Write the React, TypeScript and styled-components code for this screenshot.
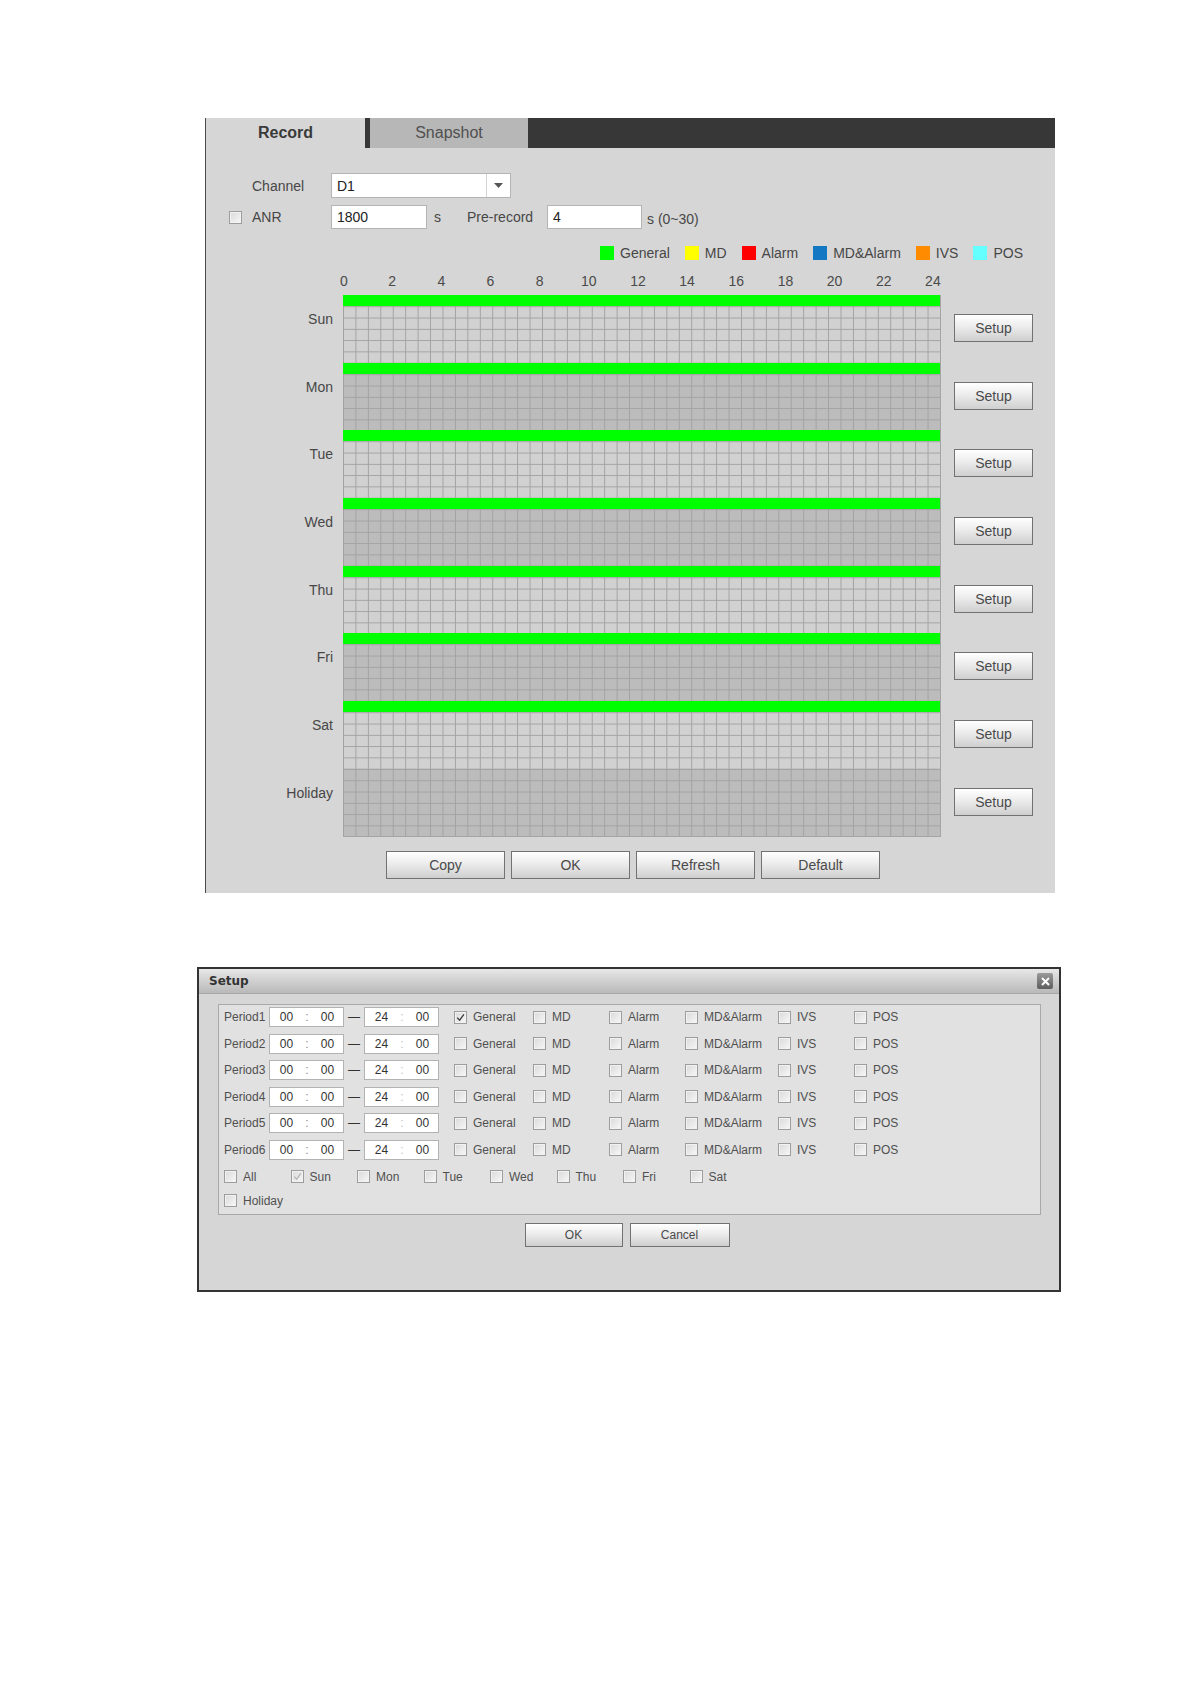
import React from 'react';
import styled, { createGlobalStyle } from 'styled-components';

const GlobalStyle = createGlobalStyle`
  body {
    margin: 0;
    background: #ffffff;
    font-family: "Liberation Sans", Arial, sans-serif;
  }
`;

const Page = styled.div`
  width: 1191px;
  min-height: 1684px;
  padding-top: 118px;
  box-sizing: border-box;
`;

/* ---------- record panel ---------- */

const Panel = styled.section`
  margin-left: 205px;
  width: 850px;
  height: 775px;
  box-sizing: border-box;
  background: #d6d6d6;
  border-left: 1px solid #4a4a4a;
  display: flex;
  flex-direction: column;
  color: #474747;
  font-size: 14px;
`;

const TabBar = styled.div`
  display: flex;
  height: 30px;
  background: #373737;
`;

const Tab = styled.div<{ $active?: boolean }>`
  width: ${p => (p.$active ? 159 : 158)}px;
  display: flex;
  align-items: center;
  justify-content: center;
  font-size: 16px;
  font-weight: ${p => (p.$active ? 700 : 400)};
  color: ${p => (p.$active ? '#3a3a3a' : '#505050')};
  background: ${p => (p.$active ? '#d6d6d6' : '#b7b7b7')};
  & + & {
    margin-left: 5px;
  }
`;

const Form = styled.div`
  padding: 25px 0 0 23px;
  display: flex;
  flex-direction: column;
  gap: 7px;
`;

const FieldRow = styled.div<{ $h: number }>`
  display: flex;
  align-items: center;
  height: ${p => p.$h}px;
`;

const CheckSlot = styled.div`
  width: 23px;
  display: flex;
`;

const FieldLabel = styled.span<{ $w: number }>`
  width: ${p => p.$w}px;
  flex: none;
`;

const TextBox = styled.div<{ $w: number }>`
  width: ${p => p.$w}px;
  height: 100%;
  box-sizing: border-box;
  border: 1px solid #b4b4b4;
  background: #fff;
  display: flex;
  align-items: center;
  padding-left: 5px;
  color: #222;
`;

const SelectBox = styled(TextBox)`
  justify-content: space-between;
  padding-right: 0;
`;

const SelectArrow = styled.span`
  width: 23px;
  height: 100%;
  border-left: 1px solid #d4d4d4;
  display: flex;
  align-items: center;
  justify-content: center;
`;

const Unit = styled.span<{ $ml: number; $mr?: number; $down?: number }>`
  margin-left: ${p => p.$ml}px;
  margin-right: ${p => p.$mr ?? 0}px;
  padding-top: ${p => p.$down ?? 0}px;
`;

const Legend = styled.div`
  display: flex;
  align-items: center;
  height: 16px;
  margin-top: 16px;
  padding-left: 394px;
  gap: 15px;
`;

const LegendItem = styled.span`
  display: flex;
  align-items: center;
  gap: 6px;
`;

const Swatch = styled.span<{ $c: string }>`
  width: 14px;
  height: 14px;
  background: ${p => p.$c};
`;

const Axis = styled.div`
  display: flex;
  justify-content: space-between;
  width: 590px;
  height: 16px;
  margin: 12px 0 6px 137px;
  color: #4a4a4a;
`;

const Tick = styled.span<{ $shift: number }>`
  width: 0;
  display: flex;
  justify-content: center;
  white-space: nowrap;
  transform: translateX(${p => p.$shift}px);
`;

const Schedule = styled.div`
  display: flex;
  flex-direction: column;
`;

const DayRow = styled.div`
  display: flex;
  height: 67.7px;
`;

const DayLabel = styled.span`
  width: 127px;
  margin-right: 10px;
  padding-top: 16px;
  text-align: right;
  line-height: 16px;
  box-sizing: border-box;
`;

const DayGrid = styled.div<{ $dark: boolean; $last?: boolean }>`
  width: 598px;
  box-sizing: border-box;
  border-right: 1px solid #a4a4a4;
  border-bottom: ${p => (p.$last ? '1px solid #a4a4a4' : 'none')};
  background-color: ${p => (p.$dark ? '#bcbcbc' : '#d1d1d1')};
  background-image: linear-gradient(to right, #a2a2a2 1px, transparent 1px),
    linear-gradient(to bottom, #a2a2a2 1px, transparent 1px);
  background-size: calc(100% / 48) 11.283px;
`;

const RecordBar = styled.div`
  height: 11px;
  background: #00ff00;
`;

const Button = styled.button<{ $w: number; $h: number; $fs?: number }>`
  width: ${p => p.$w}px;
  height: ${p => p.$h}px;
  flex: none;
  padding: 0;
  box-sizing: border-box;
  border: 1px solid #727272;
  background: linear-gradient(#ffffff 0%, #ececec 45%, #cfcfcf 100%);
  font-family: "Liberation Sans", Arial, sans-serif;
  font-size: ${p => p.$fs ?? 14}px;
  color: #4a4a4a;
`;

const SetupSlot = styled.div`
  margin-left: 13px;
  padding-top: 19px;
`;

const ActionRow = styled.div`
  display: flex;
  gap: 6px;
  margin: 14px 0 0 180px;
`;

/* ---------- setup dialog ---------- */

const Dialog = styled.section`
  margin: 74px 0 0 197px;
  width: 864px;
  height: 325px;
  box-sizing: border-box;
  border: 2px solid #333;
  background: #d6d6d6;
  display: flex;
  flex-direction: column;
  font-size: 12px;
  color: #505050;
`;

const DialogHeader = styled.header`
  height: 24px;
  border-bottom: 1px solid #a8a8a8;
  background: linear-gradient(#e8e8e8 0%, #d2d2d2 45%, #b9b9b9 100%);
  display: flex;
  align-items: center;
  justify-content: space-between;
  padding: 0 6px 0 10px;
`;

const DialogTitle = styled.span`
  font-family: "DejaVu Sans", Verdana, sans-serif;
  font-weight: 700;
  font-size: 12px;
  color: #333;
`;

const CloseButton = styled.span`
  width: 16px;
  height: 16px;
  border-radius: 2px;
  background: linear-gradient(#9a9a9a, #5e5e5e);
  display: flex;
  align-items: center;
  justify-content: center;
`;

const DialogBody = styled.div`
  padding: 10px 18px 0 19px;
  display: flex;
  flex-direction: column;
`;

const PeriodPanel = styled.div`
  height: 211px;
  box-sizing: border-box;
  border: 1px solid #a9a9a9;
  background: #e1e1e1;
  padding: 2px 0 0 5px;
  display: flex;
  flex-direction: column;
`;

const PeriodList = styled.div`
  display: flex;
  flex-direction: column;
  gap: 6.6px;
`;

const PeriodRow = styled.div`
  display: flex;
  align-items: center;
  height: 20px;
`;

const PeriodLabel = styled.span`
  width: 45px;
`;

const TimeBox = styled.div`
  width: 75px;
  height: 20px;
  box-sizing: border-box;
  border: 1px solid #b2b2b2;
  background: #fff;
  display: grid;
  grid-template-columns: 33px 8px 33px;
  align-items: center;
  text-align: center;
  color: #333;
`;

const Colon = styled.span<{ $pale?: boolean }>`
  color: ${p => (p.$pale ? '#c4c4c4' : '#8a8a8a')};
`;

const Dash = styled.span`
  width: 20px;
  text-align: center;
  color: #333;
`;

const TypeGrid = styled.div`
  display: grid;
  grid-template-columns: 79px 76px 76px 93px 76px auto;
  margin-left: 15px;
`;

const DayGridRow = styled.div<{ $mt: number }>`
  display: grid;
  grid-template-columns: repeat(8, 66.5px);
  height: 20px;
  align-items: center;
  margin-top: ${p => p.$mt}px;
`;

const CheckItem = styled.label`
  display: flex;
  align-items: center;
  gap: 6px;
  white-space: nowrap;
`;

const Box = styled.span`
  width: 13px;
  height: 13px;
  flex: none;
  box-sizing: border-box;
  border: 1px solid #9d9d9d;
  background: linear-gradient(135deg, #d9d9d9, #f8f8f8);
  box-shadow: inset 0 0 0 1px #f2f2f2;
  display: inline-flex;
  align-items: center;
  justify-content: center;
`;

const DialogActions = styled.div`
  display: flex;
  justify-content: center;
  gap: 7px;
  margin-top: 8px;
  padding-right: 5px;
`;

/* ---------- pieces ---------- */

const CheckBox = ({ checked, faded }: { checked?: boolean; faded?: boolean }) => (
  <Box>
    {checked && (
      <svg width="9" height="9" viewBox="0 0 9 9">
        <path
          d="M1.2 4.6 L3.6 7.2 L7.9 1.4"
          fill="none"
          stroke={faded ? '#b5b5b5' : '#3a3a3a'}
          strokeWidth="1.3"
        />
      </svg>
    )}
  </Box>
);

const legend = [
  { name: 'General', color: '#00ff00' },
  { name: 'MD', color: '#ffff00' },
  { name: 'Alarm', color: '#ff0000' },
  { name: 'MD&Alarm', color: '#1479c2' },
  { name: 'IVS', color: '#ff8c00' },
  { name: 'POS', color: '#66ffff' },
];

const days = [
  { name: 'Sun', rec: true },
  { name: 'Mon', rec: true },
  { name: 'Tue', rec: true },
  { name: 'Wed', rec: true },
  { name: 'Thu', rec: true },
  { name: 'Fri', rec: true },
  { name: 'Sat', rec: true },
  { name: 'Holiday', rec: false },
];

const hours = [0, 2, 4, 6, 8, 10, 12, 14, 16, 18, 20, 22, 24];

const weekDays = ['All', 'Sun', 'Mon', 'Tue', 'Wed', 'Thu', 'Fri', 'Sat'];

function RecordPanel() {
  return (
    <Panel>
      <TabBar>
        <Tab $active>Record</Tab>
        <Tab>Snapshot</Tab>
      </TabBar>

      <Form>
        <FieldRow $h={25}>
          <CheckSlot />
          <FieldLabel $w={79}>Channel</FieldLabel>
          <SelectBox $w={180}>
            D1
            <SelectArrow>
              <svg width="9" height="5" viewBox="0 0 9 5">
                <path d="M0 0 L9 0 L4.5 5 Z" fill="#555" />
              </svg>
            </SelectArrow>
          </SelectBox>
        </FieldRow>
        <FieldRow $h={24}>
          <CheckSlot>
            <CheckBox />
          </CheckSlot>
          <FieldLabel $w={79}>ANR</FieldLabel>
          <TextBox $w={96}>1800</TextBox>
          <Unit $ml={7} $mr={26}>s</Unit>
          <FieldLabel $w={80}>Pre-record</FieldLabel>
          <TextBox $w={95}>4</TextBox>
          <Unit $ml={5} $down={4}>s (0~30)</Unit>
        </FieldRow>
      </Form>

      <Legend>
        {legend.map(l => (
          <LegendItem key={l.name}>
            <Swatch $c={l.color} />
            {l.name}
          </LegendItem>
        ))}
      </Legend>

      <Axis>
        {hours.map(h => (
          <Tick key={h} $shift={h === 0 ? 1 : 0}>
            {h}
          </Tick>
        ))}
      </Axis>

      <Schedule>
        {days.map((d, i) => (
          <DayRow key={d.name}>
            <DayLabel>{d.name}</DayLabel>
            <DayGrid $dark={i % 2 === 1} $last={i === days.length - 1}>
              {d.rec && <RecordBar />}
            </DayGrid>
            <SetupSlot>
              <Button $w={79} $h={28}>Setup</Button>
            </SetupSlot>
          </DayRow>
        ))}
      </Schedule>

      <ActionRow>
        <Button $w={119} $h={28}>Copy</Button>
        <Button $w={119} $h={28}>OK</Button>
        <Button $w={119} $h={28}>Refresh</Button>
        <Button $w={119} $h={28}>Default</Button>
      </ActionRow>
    </Panel>
  );
}

function SetupDialog() {
  return (
    <Dialog>
      <DialogHeader>
        <DialogTitle>Setup</DialogTitle>
        <CloseButton>
          <svg width="9" height="9" viewBox="0 0 9 9">
            <path d="M1 1 L8 8 M8 1 L1 8" stroke="#fff" strokeWidth="2" />
          </svg>
        </CloseButton>
      </DialogHeader>

      <DialogBody>
        <PeriodPanel>
          <PeriodList>
            {[1, 2, 3, 4, 5, 6].map(n => (
              <PeriodRow key={n}>
                <PeriodLabel>Period{n}</PeriodLabel>
                <TimeBox>
                  <span>00</span>
                  <Colon>:</Colon>
                  <span>00</span>
                </TimeBox>
                <Dash>—</Dash>
                <TimeBox>
                  <span>24</span>
                  <Colon $pale>:</Colon>
                  <span>00</span>
                </TimeBox>
                <TypeGrid>
                  {legend.map(l => (
                    <CheckItem key={l.name}>
                      <CheckBox checked={n === 1 && l.name === 'General'} />
                      {l.name}
                    </CheckItem>
                  ))}
                </TypeGrid>
              </PeriodRow>
            ))}
          </PeriodList>

          <DayGridRow $mt={7}>
            {weekDays.map(d => (
              <CheckItem key={d}>
                <CheckBox checked={d === 'Sun'} faded />
                {d}
              </CheckItem>
            ))}
          </DayGridRow>
          <DayGridRow $mt={4}>
            <CheckItem>
              <CheckBox />
              Holiday
            </CheckItem>
          </DayGridRow>
        </PeriodPanel>

        <DialogActions>
          <Button $w={98} $h={24} $fs={12}>OK</Button>
          <Button $w={100} $h={24} $fs={12}>Cancel</Button>
        </DialogActions>
      </DialogBody>
    </Dialog>
  );
}

export default function App() {
  return (
    <>
      <GlobalStyle />
      <Page>
        <RecordPanel />
        <SetupDialog />
      </Page>
    </>
  );
}
